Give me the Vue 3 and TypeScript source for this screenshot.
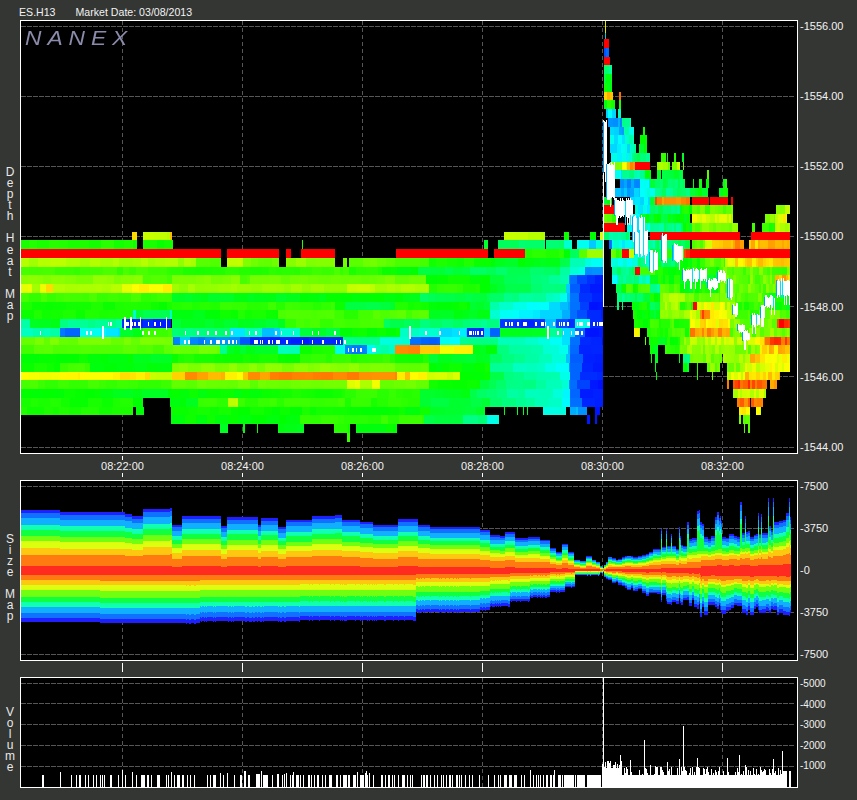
<template>
  <div class="page">
    <header class="title">
      <span>ES.H13</span>
      <span>Market Date: 03/08/2013</span>
    </header>

    <section class="row row-heat">
      <div class="side">
        <span v-for="(ch, i) in 'Depth Heat Map'" :key="i" class="side-ch">{{ ch }}</span>
      </div>
      <div class="panel">
        <canvas ref="heatCanvas" width="776" height="431"></canvas>
        <span class="logo">NANEX</span>
      </div>
      <div class="axis axis-heat">
        <span v-for="p in heatTicks" :key="p">-{{ p }}</span>
      </div>
    </section>

    <div class="times">
      <div v-for="t in times" :key="t" class="time">
        <i class="tick"></i>
        <span>{{ t }}</span>
        <i class="tick"></i>
      </div>
    </div>

    <section class="row row-size">
      <div class="side">
        <span v-for="(ch, i) in 'Size Map'" :key="i" class="side-ch">{{ ch }}</span>
      </div>
      <div class="panel">
        <canvas ref="sizeCanvas" width="776" height="178"></canvas>
      </div>
      <div class="axis axis-size">
        <span v-for="(s, i) in sizeTicks" :key="i">-{{ s }}</span>
      </div>
    </section>

    <div class="marks">
      <i v-for="t in times" :key="t" class="mark"></i>
    </div>

    <section class="row row-vol">
      <div class="side">
        <span v-for="(ch, i) in 'Volume'" :key="i" class="side-ch">{{ ch }}</span>
      </div>
      <div class="panel">
        <canvas ref="volCanvas" width="776" height="109"></canvas>
      </div>
      <div class="axis axis-vol">
        <span v-for="v in volTicks" :key="v">-{{ v }}</span>
      </div>
    </section>
  </div>
</template>

<script setup lang="ts">
import { onMounted, ref } from 'vue'

type Seg = [number, number, number]

const heatTicks = ['1556.00', '1554.00', '1552.00', '1550.00', '1548.00', '1546.00', '1544.00']
const sizeTicks = ['7500', '3750', '0', '3750', '7500']
const volTicks = ['5000', '4000', '3000', '2000', '1000']
const times = ['08:22:00', '08:24:00', '08:26:00', '08:28:00', '08:30:00', '08:32:00']

const heatCanvas = ref<HTMLCanvasElement | null>(null)
const sizeCanvas = ref<HTMLCanvasElement | null>(null)
const volCanvas = ref<HTMLCanvasElement | null>(null)

const gridX = [122, 242, 362, 482, 602, 722]

let seed = 4711
const rnd = () => {
  seed = (seed * 16807) % 2147483647
  return seed / 2147483647
}

// heat 0 = blue, 25 = cyan, 50 = green, 75 = yellow, 100 = red
const heat = (v: number) => {
  const c = Math.max(0, Math.min(100, v))
  return `hsl(${240 * (1 - c / 100)},100%,50%)`
}

const rowTop = (k: number) => Math.round(231.6 + 8.75 * k)

// price rows before the 08:30 jump, k = quarter points below 1550
const leftRows: Record<number, Seg[]> = {
  0: [[132, 137, 78], [143, 170, 69], [170, 172, 82], [504, 545, 68], [564, 569, 50], [590, 596, 50], [600, 603, 72]],
  1: [[21, 133, 53], [133, 137, 50], [143, 173, 52], [302, 303, 52], [484, 488, 46], [498, 545, 40], [546, 564, 38], [564, 572, 31], [577, 589, 25], [589, 596, 20], [596, 603, 28]],
  2: [[21, 221, 100], [227, 279, 100], [286, 291, 100], [301, 335, 100], [396, 488, 100], [494, 525, 100], [525, 564, 54], [564, 570, 50], [570, 579, 42], [579, 587, 60], [587, 603, 66]],
  3: [[21, 178, 67], [178, 184, 63], [184, 196, 66], [196, 221, 59], [227, 243, 68], [243, 251, 62], [251, 279, 60], [286, 335, 64], [343, 347, 62], [349, 395, 60], [395, 429, 57], [429, 480, 52], [480, 495, 50], [495, 518, 47], [518, 560, 48], [560, 570, 42], [570, 585, 32], [585, 603, 27]],
  4: [[21, 170, 56], [170, 300, 53], [300, 343, 56], [343, 349, 58], [349, 382, 53], [382, 418, 50], [418, 470, 44], [470, 560, 41], [560, 570, 34], [570, 585, 28], [585, 603, 15]],
  5: [[21, 143, 63], [143, 172, 58], [172, 240, 62], [240, 250, 58], [250, 426, 61], [426, 490, 50]],
  6: [[21, 28, 71], [28, 32, 73], [32, 40, 66], [40, 46, 72], [46, 53, 77], [53, 122, 67], [122, 132, 73], [132, 172, 76], [172, 347, 65], [347, 375, 70], [375, 429, 67], [429, 480, 54], [480, 490, 51]],
  7: [[21, 172, 56], [172, 300, 47], [300, 420, 49], [420, 428, 40], [428, 490, 43]],
  8: [[21, 172, 52], [172, 220, 54], [220, 335, 55], [335, 345, 50], [345, 395, 44], [395, 429, 53], [429, 470, 50], [470, 490, 46]],
  9: [[21, 133, 52], [133, 136, 30], [136, 143, 46], [143, 170, 42], [170, 172, 30], [172, 205, 48], [205, 220, 50], [220, 278, 52], [278, 335, 57], [335, 360, 55], [360, 429, 58], [429, 490, 48]],
  10: [[21, 30, 35], [30, 60, 47], [60, 122, 36], [122, 171, 3], [172, 285, 46], [285, 384, 56], [384, 420, 42], [420, 470, 39], [470, 500, 36], [500, 545, 4], [545, 556, 20], [556, 575, 6], [575, 590, 28], [590, 603, 4]],
  11: [[21, 33, 30], [33, 60, 33], [60, 65, 12], [65, 80, 9], [80, 100, 26], [100, 120, 23], [120, 133, 44], [133, 143, 48], [143, 172, 56], [172, 230, 38], [230, 245, 22], [245, 262, 32], [262, 280, 19], [280, 300, 31], [300, 340, 45], [340, 400, 50], [400, 440, 30], [440, 467, 22], [467, 484, 4], [484, 490, 20], [490, 500, 10], [500, 550, 46], [550, 562, 35], [562, 575, 22], [575, 585, 10], [585, 603, 3]],
  12: [[21, 173, 61], [173, 180, 14], [180, 190, 22], [190, 205, 12], [205, 240, 15], [240, 250, 8], [250, 343, 3], [343, 380, 36], [380, 410, 29], [410, 440, 10], [440, 460, 25], [460, 490, 37]],
  13: [[21, 173, 58], [173, 220, 60], [220, 227, 35], [227, 278, 47], [278, 300, 32], [300, 335, 52], [335, 345, 28], [345, 367, 12], [367, 375, 25], [375, 395, 32], [395, 420, 87], [420, 440, 81], [440, 473, 75], [473, 497, 48]],
  14: [[21, 133, 50], [133, 172, 47], [172, 300, 52], [300, 395, 55], [395, 429, 52], [429, 490, 46]],
  15: [[21, 60, 51], [60, 90, 56], [90, 122, 50], [122, 172, 49], [172, 395, 63], [395, 429, 60], [429, 490, 50]],
  16: [[21, 60, 74], [60, 80, 76], [80, 120, 75], [120, 150, 78], [150, 172, 68], [172, 185, 78], [185, 197, 85], [197, 225, 83], [225, 243, 76], [243, 248, 82], [248, 270, 85], [270, 397, 87], [397, 405, 76], [405, 410, 82], [410, 427, 76], [427, 460, 70], [460, 490, 50]],
  17: [[21, 172, 56], [172, 347, 60], [347, 360, 72], [360, 372, 66], [372, 380, 74], [380, 429, 60], [429, 480, 52]],
  18: [[21, 100, 50], [100, 172, 48], [172, 280, 50], [280, 345, 52], [345, 420, 55], [420, 470, 47]],
  19: [[21, 133, 52], [133, 143, 50], [170, 198, 48], [198, 228, 55], [228, 238, 68], [238, 345, 55], [345, 420, 54], [420, 490, 44]],
  20: [[21, 133, 52], [136, 144, 50], [171, 350, 51], [350, 430, 50], [430, 485, 46], [504, 505, 48], [517, 518, 46], [523, 524, 46], [527, 528, 46], [543, 566, 28], [570, 578, 18], [578, 587, 14], [595, 600, 3]],
  21: [[171, 300, 50], [300, 424, 55], [424, 463, 44], [463, 487, 38], [487, 499, 28], [587, 590, 3], [595, 597, 3]],
  22: [[220, 228, 47], [243, 245, 50], [257, 258, 50], [278, 304, 47], [334, 350, 53], [356, 397, 50]],
  23: [[347, 350, 56]],
}

// rows that fade into the blue wall, with a small shift per row
const fadeShift: Record<number, number> = { 5: 6, 6: 8, 7: 2, 8: -7, 9: -9, 12: -3, 13: 0, 14: 1, 15: -2, 16: 3, 17: 3, 18: 0, 19: 1 }
const fadePts: [number, number][] = [[440, 44], [490, 41], [505, 36], [530, 33], [560, 29], [567, 24], [570, 13], [578, 9], [586, 4], [603, 2]]

const fade = (x: number) => {
  for (let i = 1; i < fadePts.length; i++) {
    const [x0, v0] = fadePts[i - 1]
    const [x1, v1] = fadePts[i]
    if (x <= x1) return v0 + ((v1 - v0) * (x - x0)) / (x1 - x0)
  }
  return 2
}

// rows after the jump
const rightRows: Record<number, Seg[]> = {
  [-22]: [[604, 609, 100]],
  [-21]: [[604, 609, 10]],
  [-20]: [[604, 610, 100]],
  [-19]: [[604, 612, 36]],
  [-18]: [[604, 612, 46]],
  [-17]: [[604, 612, 50]],
  [-16]: [[604, 613, 80], [619, 621, 85]],
  [-15]: [[604, 615, 52], [619, 621, 52]],
  [-14]: [[606, 616, 24], [618, 621, 28]],
  [-13]: [[608, 622, 14], [622, 631, 34]],
  [-12]: [[610, 624, 18], [624, 634, 30], [643, 645, 48]],
  [-11]: [[610, 625, 24], [625, 634, 34], [640, 647, 48]],
  [-10]: [[610, 630, 25], [630, 636, 35], [639, 647, 48]],
  [-9]: [[611, 632, 27], [632, 650, 38], [661, 666, 52], [667, 668, 50], [674, 676, 50], [682, 684, 50]],
  [-8]: [[610, 622, 62], [622, 627, 72], [627, 635, 85], [635, 650, 98], [657, 670, 64], [672, 680, 66], [683, 684, 60]],
  [-7]: [[612, 622, 24], [622, 645, 34], [645, 651, 46], [657, 661, 50], [662, 683, 46], [707, 709, 56]],
  [-6]: [[620, 640, 14], [640, 650, 25], [650, 685, 42], [693, 694, 50], [699, 702, 50], [706, 709, 52], [723, 727, 52]],
  [-5]: [[612, 640, 18], [640, 655, 28], [655, 690, 38], [690, 708, 48], [719, 728, 50]],
  [-4]: [[604, 612, 48], [630, 650, 24], [650, 655, 44], [655, 690, 88], [692, 709, 100], [710, 728, 100], [731, 733, 100]],
  [-3]: [[604, 615, 100], [635, 650, 25], [650, 680, 40], [680, 692, 50], [692, 733, 60], [776, 790, 66]],
  [-2]: [[604, 618, 56], [630, 640, 28], [640, 690, 47], [692, 733, 70], [765, 775, 62], [775, 787, 73]],
  [-1]: [[604, 625, 100], [627, 650, 28], [650, 683, 38], [683, 692, 50], [692, 738, 62], [752, 755, 52], [762, 775, 54], [775, 790, 66]],
  0: [[604, 630, 36], [650, 740, 100], [751, 790, 100]],
  1: [[609, 612, 14], [612, 638, 27], [638, 655, 35], [655, 690, 41], [692, 705, 60], [705, 712, 70], [712, 735, 80], [735, 744, 84], [749, 790, 81]],
  2: [[611, 622, 58], [622, 629, 100], [629, 634, 72], [634, 650, 30], [650, 665, 45], [665, 684, 54], [684, 690, 95], [690, 790, 100]],
  3: [[611, 638, 28], [638, 650, 35], [650, 662, 45], [662, 680, 40], [680, 700, 52], [700, 725, 58], [725, 735, 72], [735, 790, 80]],
  4: [[612, 635, 38], [635, 640, 100], [640, 655, 57], [655, 685, 50], [685, 720, 52], [720, 790, 59]],
  5: [[612, 618, 22], [618, 635, 38], [635, 650, 34], [650, 680, 50], [680, 720, 47], [720, 775, 60], [775, 790, 82]],
  6: [[616, 622, 44], [622, 650, 54], [650, 660, 38], [660, 680, 56], [680, 720, 50], [720, 780, 60], [780, 790, 55]],
  7: [[617, 625, 38], [625, 650, 42], [650, 660, 50], [660, 690, 65], [690, 720, 60], [720, 765, 58], [765, 790, 50]],
  8: [[617, 619, 40], [622, 623, 40], [632, 650, 52], [650, 660, 40], [660, 680, 66], [680, 693, 55], [693, 697, 100], [697, 725, 74], [725, 735, 66], [735, 770, 56], [770, 790, 50]],
  9: [[633, 650, 52], [650, 660, 45], [660, 690, 67], [690, 700, 70], [700, 710, 90], [710, 722, 74], [722, 735, 70], [735, 770, 56], [770, 790, 60]],
  10: [[634, 650, 51], [650, 690, 56], [690, 695, 72], [695, 730, 76], [730, 777, 62], [777, 790, 97]],
  11: [[634, 640, 72], [647, 690, 55], [690, 730, 85], [730, 770, 60], [770, 790, 62]],
  12: [[645, 646, 60], [649, 665, 48], [665, 680, 50], [680, 690, 62], [690, 755, 68], [755, 765, 78], [765, 790, 92]],
  13: [[650, 658, 48], [665, 680, 52], [680, 735, 64], [735, 760, 62], [760, 790, 80]],
  14: [[651, 652, 50], [655, 658, 50], [679, 680, 50], [683, 690, 38], [690, 722, 62], [723, 750, 65], [750, 760, 85], [760, 790, 74]],
  15: [[655, 656, 50], [683, 689, 46], [697, 698, 50], [707, 720, 62], [727, 745, 64], [745, 765, 72], [765, 790, 74]],
  16: [[656, 657, 50], [697, 698, 50], [712, 713, 60], [727, 745, 70], [745, 780, 80]],
  17: [[727, 729, 85], [733, 767, 92], [770, 777, 87]],
  18: [[733, 766, 68]],
  19: [[737, 750, 88], [751, 763, 88]],
  20: [[739, 750, 77], [756, 761, 72]],
  21: [[739, 741, 60], [743, 750, 58]],
  22: [[744, 745, 58], [748, 750, 60]],
}

// thick white bursts of the trade price after the jump: x0, y0, x1, y1
const priceBursts: [number, number, number, number][] = [
  [604, 120, 607, 175], [607, 162, 615, 200], [615, 198, 633, 218], [633, 215, 645, 242],
  [635, 230, 648, 257], [650, 250, 658, 273], [662, 233, 667, 263], [673, 243, 683, 263],
  [683, 268, 707, 282], [708, 278, 718, 290], [718, 270, 726, 283], [728, 277, 733, 300],
  [733, 303, 738, 317], [738, 322, 745, 333], [743, 330, 750, 343], [752, 313, 760, 327],
  [761, 305, 765, 320], [765, 295, 775, 308], [777, 278, 790, 298],
]

// small white trade prints before the jump: row, from, to, density
const prints: [number, number, number, number][] = [
  [10, 70, 122, 0.1], [10, 122, 171, 0.4], [10, 505, 603, 0.6],
  [11, 40, 45, 0.4], [11, 60, 172, 0.12], [11, 175, 300, 0.16], [11, 300, 340, 0.2],
  [11, 395, 480, 0.16], [11, 467, 484, 0.5], [11, 545, 592, 0.45],
  [12, 180, 345, 0.3], [13, 340, 378, 0.3],
]

const dashedGrid = (ctx: CanvasRenderingContext2D, rows: number[], top: number, bottom: number) => {
  ctx.fillStyle = '#565656'
  for (const y of rows) {
    for (let x = 21; x < 792; x += 6) ctx.fillRect(x, y, 5, 1)
  }
  for (const x of gridX) {
    for (let y = top; y < bottom; y += 7) ctx.fillRect(x, y, 1, 4)
  }
}

const paintRow = (ctx: CanvasRenderingContext2D, k: number, segs: Seg[], jitter: number, minW: number, maxW: number) => {
  const y = rowTop(k)
  const h = rowTop(k + 1) - y
  for (const [x0, x1, v] of segs) {
    let x = x0
    while (x < x1) {
      const w = Math.min(x1 - x, minW + Math.floor(rnd() * (maxW - minW + 1)))
      const shade = v > 97 ? 100 : v + (rnd() - 0.5) * jitter
      ctx.fillStyle = heat(shade)
      ctx.fillRect(x, y, w, h)
      x += w
    }
  }
}

const drawHeat = () => {
  const ctx = heatCanvas.value?.getContext('2d')
  if (!ctx) return
  ctx.translate(-21, -21)
  ctx.fillStyle = '#000'
  ctx.fillRect(21, 21, 776, 431)
  dashedGrid(ctx, [26, 96, 166, 236, 306, 376, 447], 21, 452)

  for (const key of Object.keys(leftRows)) {
    const k = Number(key)
    paintRow(ctx, k, leftRows[k], 3, 6, 14)
    const shift = fadeShift[k]
    if (shift === undefined) continue
    const segs = leftRows[k]
    let x = segs[segs.length - 1][1]
    const y = rowTop(k)
    const h = rowTop(k + 1) - y
    while (x < 603) {
      // blocks snap to the wall edge at 570 so it stays straight
      let w = Math.min(603 - x, 7 + Math.floor(rnd() * 8))
      if (x < 570 && x + w > 570) w = 570 - x
      const base = fade(x + w / 2)
      ctx.fillStyle = heat(base + (x < 566 ? shift : 0) + (rnd() - 0.5) * 3)
      ctx.fillRect(x, y, w, h)
      x += w
    }
  }

  for (const key of Object.keys(rightRows)) {
    const k = Number(key)
    paintRow(ctx, k, rightRows[k], 9, 2, 5)
  }

  // trade prints
  ctx.fillStyle = '#fff'
  for (const [k, x0, x1, density] of prints) {
    const y = rowTop(k) + 3
    for (let x = x0; x < x1; x += 2) {
      if (rnd() > density) continue
      const tall = rnd() < 0.08
      ctx.fillRect(x, tall ? y - 5 : y, 1 + Math.floor(rnd() * 2), tall ? 13 : 4)
    }
  }
  ctx.fillRect(603, 120, 1, 187)

  // price bursts with a thin blue edge, spiky ends and a few holes
  for (const [x0, y0, x1, y1] of priceBursts) {
    ctx.fillStyle = '#00a0ff'
    ctx.fillRect(x0 - 1, y0 + 2, 1, y1 - y0 - 4)
    for (let x = x0; x < x1; x++) {
      const hole = rnd() < 0.14
      ctx.fillStyle = hole ? '#00e0ff' : '#fff'
      const up = Math.floor(rnd() * 4)
      const down = rnd() < 0.15 ? 10 : Math.floor(rnd() * 4)
      ctx.fillRect(x, y0 + up, 1, y1 - y0 - up - 3 + down)
    }
  }

  ctx.fillStyle = '#e6e600'
  ctx.fillRect(605, 21, 1, 12)
  ctx.fillStyle = '#00c8e0'
  ctx.fillRect(605, 33, 1, 6)
}

// band limits from the middle outwards, as a share of the column's height
const bandColors = ['#ff2a20', '#ff7a10', '#ffc810', '#dcff10', '#70ff10', '#10ff40', '#10ffb0', '#10b0ff', '#1070ff', '#2020ff']
const upShare = [0.07, 0.25, 0.37, 0.48, 0.57, 0.67, 0.75, 0.87, 0.95, 1]
const downShare = [0.1, 0.2, 0.29, 0.39, 0.52, 0.62, 0.71, 0.83, 0.92, 1]

const topSteps: [number, number][] = [[21, 60], [60, 58], [125, 56], [132, 54], [143, 61], [170, 62], [172, 45], [182, 54], [221, 44], [227, 53], [258, 45], [261, 52], [278, 43], [286, 50], [312, 54], [335, 55], [342, 50], [360, 48], [373, 45], [398, 51], [418, 45], [430, 43], [480, 40], [490, 35], [500, 34], [505, 38], [515, 32], [528, 33], [540, 30], [550, 22], [556, 18], [562, 26], [568, 18], [574, 10], [580, 9], [586, 14], [592, 10], [596, 8], [600, 4], [603, 2]]
const bottomSteps: [number, number][] = [[21, 52], [100, 53], [200, 51], [300, 50], [415, 51], [416, 42], [480, 40], [490, 36], [510, 31], [530, 27], [550, 22], [565, 17], [575, 5], [590, 5], [600, 3], [603, 2]]
const topLine: [number, number][] = [[604, 5], [608, 13], [615, 10], [625, 13], [640, 14], [650, 19], [660, 22], [680, 24], [684, 28], [700, 30], [720, 33], [740, 35], [760, 38], [775, 46], [790, 56]]
const bottomLine: [number, number][] = [[604, 8], [626, 18], [640, 22], [660, 26], [670, 34], [683, 31], [703, 40], [790, 43]]

const stepAt = (steps: [number, number][], x: number) => {
  let h = steps[0][1]
  for (const [sx, sh] of steps) {
    if (x >= sx) h = sh
  }
  return h
}

const lineAt = (pts: [number, number][], x: number) => {
  for (let i = 1; i < pts.length; i++) {
    const [x0, h0] = pts[i - 1]
    const [x1, h1] = pts[i]
    if (x <= x1) return h0 + ((h1 - h0) * (x - x0)) / (x1 - x0)
  }
  return pts[pts.length - 1][1]
}

const drawSize = () => {
  const ctx = sizeCanvas.value?.getContext('2d')
  if (!ctx) return
  ctx.translate(-21, -481)
  ctx.fillStyle = '#000'
  ctx.fillRect(21, 481, 776, 178)
  dashedGrid(ctx, [486, 528, 612, 654], 481, 659)

  const mid = 570
  let up = 0
  let down = 0
  let hold = 0
  for (let x = 21; x <= 790; x++) {
    if (x <= 603) {
      up = stepAt(topSteps, x)
      down = stepAt(bottomSteps, x) + (x > 180 && rnd() < 0.2 ? 1 : 0)
    } else if (hold > 0) {
      hold--
    } else {
      // the tape after the jump moves in short runs of 2-4 px, with thin spikes
      hold = 1 + Math.floor(rnd() * 3)
      up = lineAt(topLine, x) * (0.9 + rnd() * 0.2)
      down = lineAt(bottomLine, x) * (0.86 + rnd() * 0.26)
      if (x > 645 && rnd() < 0.36) {
        up *= x > 690 ? 1.4 + rnd() * 0.55 : 1.3 + rnd() * 0.6
        hold = rnd() < 0.5 ? 0 : 1
      }
      if (x > 660 && rnd() < 0.12) down *= 1.12 + rnd() * 0.12
      up = Math.min(up, 72)
    }
    const core = x > 700 ? 2 : 0
    for (let b = bandColors.length - 1; b >= 0; b--) {
      ctx.fillStyle = bandColors[b]
      // spikes stretch only the outer bands, the core keeps to the base line
      const baseUp = x > 604 ? Math.min(up, lineAt(topLine, x) * 1.1) : up
      const shareUp = b < 5 ? baseUp : up
      const hu = Math.round(shareUp * upShare[b]) + (b < 3 ? core : 0)
      const hd = Math.round(down * downShare[b]) + (b < 3 ? core : 0)
      ctx.fillRect(x, mid - hu, 1, hu + hd)
    }
  }
}

// left side of the volume chart, x of each single print group: x, width, extra height
const volLeft: [number, number, number][] = [[42, 2, 0], [60, 1, 3], [71, 1, 0], [76, 1, 0], [79, 2, 0], [85, 1, 0], [88, 1, 0], [93, 1, 0], [96, 1, 0], [100, 1, 0], [102, 1, 0], [104, 1, 0], [110, 2, 0], [118, 1, 0], [122, 1, 5], [125, 1, 0], [132, 1, 3], [136, 1, 0], [141, 4, 0], [147, 2, 0], [151, 1, 0], [157, 3, 0], [166, 1, 0], [168, 1, 0], [171, 1, 3], [174, 1, 0], [177, 3, 0], [182, 2, 0], [187, 1, 0], [190, 1, 0], [194, 1, 0], [207, 1, 0], [210, 1, 0], [213, 3, 0], [220, 1, 2], [223, 1, 0], [227, 1, 2], [234, 1, 0], [240, 2, 0], [244, 2, 4], [248, 2, 0], [256, 4, 1], [261, 1, 4], [263, 5, 0], [272, 1, 0], [277, 2, 1], [282, 1, 0], [284, 1, 1], [286, 1, 2], [290, 1, 0]]

const volSpikes: [number, number][] = [[620, 755], [630, 760], [644, 740], [667, 762], [679, 759], [683, 726], [697, 758], [727, 758], [739, 755], [745, 765], [773, 759], [782, 751], [650, 765], [655, 766], [660, 768], [690, 768], [703, 768], [760, 767]]

const drawVol = () => {
  const ctx = volCanvas.value?.getContext('2d')
  if (!ctx) return
  ctx.translate(-21, -678)
  ctx.fillStyle = '#000'
  ctx.fillRect(21, 678, 776, 109)
  dashedGrid(ctx, [683, 703, 724, 745, 766], 678, 787)

  ctx.fillStyle = '#fff'
  for (const [x, w, extra] of volLeft) {
    ctx.fillRect(x, 775 - extra, w, 12 + extra)
  }
  for (let x = 292; x < 560; x++) {
    if (rnd() < 0.36) {
      const extra = rnd() < 0.08 ? 2 + Math.floor(rnd() * 4) : 0
      ctx.fillRect(x, 775 - extra, 1, 12 + extra)
    }
  }
  // almost solid run up to the jump
  ctx.fillRect(560, 775, 41, 12)
  ctx.fillStyle = '#000'
  for (const x of [561, 563, 574, 576, 585, 586]) ctx.fillRect(x, 775, 1, 12)
  ctx.fillStyle = '#fff'
  ctx.fillRect(603, 678, 1, 109)

  for (let x = 602; x <= 790; x++) {
    if (x === 787 || x === 788) continue
    let top = 775
    if (x < 622) top = 760 + Math.floor(rnd() * 9)
    else if (rnd() < 0.6) top = 775 - Math.floor(rnd() * 9)
    if (x >= 783) top = 771
    ctx.fillRect(x, top, 1, 787 - top)
  }
  for (const [x, top] of volSpikes) ctx.fillRect(x, top, 1, 787 - top)
}

onMounted(() => {
  drawHeat()
  drawSize()
  drawVol()
})
</script>

<style scoped>
.page {
  width: 857px;
  height: 800px;
  overflow: hidden;
  background: #343633;
  color: #f2f2f2;
  font-family: "Liberation Sans", Arial, sans-serif;
}
.title {
  display: flex;
  gap: 20px;
  height: 20px;
  padding-left: 19px;
  box-sizing: border-box;
  font-size: 10.6px;
  line-height: 24px;
}
.row {
  display: grid;
  grid-template-columns: 20px 778px 1fr;
}
.row-heat { height: 433px; }
.row-size { height: 180px; }
.row-vol { height: 111px; }
.side {
  display: flex;
  flex-direction: column;
  align-items: center;
  justify-content: center;
  padding-top: 15px;
  font-size: 12px;
  line-height: 11px;
  color: #e8e8e8;
}
.side-ch { height: 11.1px; }
.panel {
  position: relative;
  border: 1px solid #fff;
  box-sizing: border-box;
  background: #000;
}
.panel canvas { display: block; }
.logo {
  position: absolute;
  left: 4px;
  top: 5px;
  font-size: 20px;
  line-height: 24px;
  font-style: italic;
  letter-spacing: 5.2px;
  color: #8a8aaa;
  transform: scaleX(1.14);
  transform-origin: left center;
}
.axis {
  display: flex;
  flex-direction: column;
  justify-content: space-between;
  align-self: start;
  padding-left: 2px;
  margin-top: -1px;
  font-size: 11px;
  line-height: 14px;
}
.axis-heat { height: 435px; }
.axis-size { height: 182px; }
.axis-vol { height: 96px; margin-top: 0; font-size: 10px; }
.times,
.marks {
  display: grid;
  grid-template-columns: repeat(6, 119px);
  column-gap: 1px;
  padding-left: 63px;
}
.times { height: 27px; padding-top: 3px; box-sizing: border-box; }
.time {
  display: flex;
  flex-direction: column;
  align-items: center;
  font-size: 11px;
  line-height: 13px;
}
.tick { width: 1px; height: 4px; background: #fff; flex: none; }
.marks { height: 17px; padding-top: 3px; box-sizing: border-box; }
.mark { justify-self: center; width: 1px; height: 9px; background: #fff; }
</style>

<style>
html, body { background: #343633; }
</style>
